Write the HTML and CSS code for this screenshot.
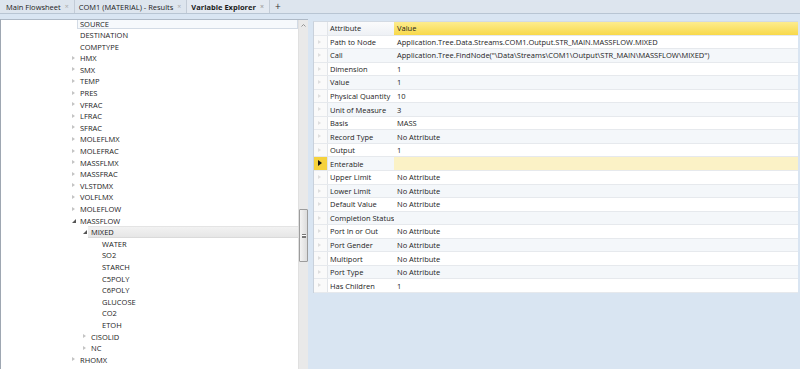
FILE: index.html
```html
<!DOCTYPE html>
<html>
<head>
<meta charset="utf-8">
<link rel="stylesheet" href="styles.css">
</head>
<body>
<div class="tabbar">
  <div class="tab"><span>Main Flowsheet</span><span class="x">×</span></div>
  <div class="tab"><span>COM1 (MATERIAL) - Results</span><span class="x">×</span></div>
  <div class="tab active"><span>Variable Explorer</span><span class="x">×</span></div>
  <div class="plus">+</div>
</div>
<div class="main">
  <div class="left">
    <div class="tree">
      <div class="tree-inner">
        <div class="node l0"><span class="exp"></span><span class="lbl hot">SOURCE</span></div>
        <div class="node l0"><span class="exp"></span><span class="lbl">DESTINATION</span></div>
        <div class="node l0"><span class="exp"></span><span class="lbl">COMPTYPE</span></div>
        <div class="node l0"><span class="exp c"></span><span class="lbl">HMX</span></div>
        <div class="node l0"><span class="exp c"></span><span class="lbl">SMX</span></div>
        <div class="node l0"><span class="exp c"></span><span class="lbl">TEMP</span></div>
        <div class="node l0"><span class="exp c"></span><span class="lbl">PRES</span></div>
        <div class="node l0"><span class="exp c"></span><span class="lbl">VFRAC</span></div>
        <div class="node l0"><span class="exp c"></span><span class="lbl">LFRAC</span></div>
        <div class="node l0"><span class="exp c"></span><span class="lbl">SFRAC</span></div>
        <div class="node l0"><span class="exp c"></span><span class="lbl">MOLEFLMX</span></div>
        <div class="node l0"><span class="exp c"></span><span class="lbl">MOLEFRAC</span></div>
        <div class="node l0"><span class="exp c"></span><span class="lbl">MASSFLMX</span></div>
        <div class="node l0"><span class="exp c"></span><span class="lbl">MASSFRAC</span></div>
        <div class="node l0"><span class="exp c"></span><span class="lbl">VLSTDMX</span></div>
        <div class="node l0"><span class="exp c"></span><span class="lbl">VOLFLMX</span></div>
        <div class="node l0"><span class="exp c"></span><span class="lbl">MOLEFLOW</span></div>
        <div class="node l0"><span class="exp o"></span><span class="lbl">MASSFLOW</span></div>
        <div class="node l1"><span class="exp o"></span><span class="lbl sel">MIXED</span></div>
        <div class="node l2"><span class="exp"></span><span class="lbl">WATER</span></div>
        <div class="node l2"><span class="exp"></span><span class="lbl">SO2</span></div>
        <div class="node l2"><span class="exp"></span><span class="lbl">STARCH</span></div>
        <div class="node l2"><span class="exp"></span><span class="lbl">C5POLY</span></div>
        <div class="node l2"><span class="exp"></span><span class="lbl">C6POLY</span></div>
        <div class="node l2"><span class="exp"></span><span class="lbl">GLUCOSE</span></div>
        <div class="node l2"><span class="exp"></span><span class="lbl">CO2</span></div>
        <div class="node l2"><span class="exp"></span><span class="lbl">ETOH</span></div>
        <div class="node l1"><span class="exp c"></span><span class="lbl">CISOLID</span></div>
        <div class="node l1"><span class="exp c"></span><span class="lbl">NC</span></div>
        <div class="node l0"><span class="exp c"></span><span class="lbl">RHOMX</span></div>
      </div>
    </div>
    <div class="vscroll">
      <div class="arrow"><svg width="5" height="3" viewBox="0 0 5 3"><polyline points="0.5,2.5 2.5,0.5 4.5,2.5" fill="none" stroke="#8a8a8a" stroke-width="0.9"/></svg></div>
      <div class="thumb"><span class="grip"></span></div>
    </div>
  </div>
  <div class="right">
    <div class="grid">
      <div class="row head"><div class="rh"></div><div class="c1">Attribute</div><div class="c2 hv">Value</div></div>
      <div class="row"><div class="rh"></div><div class="c1">Path to Node</div><div class="c2">Application.Tree.Data.Streams.COM1.Output.STR_MAIN.MASSFLOW.MIXED</div></div>
      <div class="row alt"><div class="rh"></div><div class="c1">Call</div><div class="c2">Application.Tree.FindNode("\Data\Streams\COM1\Output\STR_MAIN\MASSFLOW\MIXED")</div></div>
      <div class="row"><div class="rh"></div><div class="c1">Dimension</div><div class="c2">1</div></div>
      <div class="row alt"><div class="rh"></div><div class="c1">Value</div><div class="c2">1</div></div>
      <div class="row"><div class="rh"></div><div class="c1">Physical Quantity</div><div class="c2">10</div></div>
      <div class="row alt"><div class="rh"></div><div class="c1">Unit of Measure</div><div class="c2">3</div></div>
      <div class="row"><div class="rh"></div><div class="c1">Basis</div><div class="c2">MASS</div></div>
      <div class="row alt"><div class="rh"></div><div class="c1">Record Type</div><div class="c2">No Attribute</div></div>
      <div class="row"><div class="rh"></div><div class="c1">Output</div><div class="c2">1</div></div>
      <div class="row alt cur"><div class="rh"></div><div class="c1">Enterable</div><div class="c2"></div></div>
      <div class="row"><div class="rh"></div><div class="c1">Upper Limit</div><div class="c2">No Attribute</div></div>
      <div class="row alt"><div class="rh"></div><div class="c1">Lower Limit</div><div class="c2">No Attribute</div></div>
      <div class="row"><div class="rh"></div><div class="c1">Default Value</div><div class="c2">No Attribute</div></div>
      <div class="row alt"><div class="rh"></div><div class="c1">Completion Status</div><div class="c2"></div></div>
      <div class="row"><div class="rh"></div><div class="c1">Port In or Out</div><div class="c2">No Attribute</div></div>
      <div class="row alt"><div class="rh"></div><div class="c1">Port Gender</div><div class="c2">No Attribute</div></div>
      <div class="row"><div class="rh"></div><div class="c1">Multiport</div><div class="c2">No Attribute</div></div>
      <div class="row alt"><div class="rh"></div><div class="c1">Port Type</div><div class="c2">No Attribute</div></div>
      <div class="row"><div class="rh"></div><div class="c1">Has Children</div><div class="c2">1</div></div>
    </div>
  </div>
</div>
</body>
</html>
```
FILE: styles.css
```css
* { box-sizing: border-box; }
html, body { margin: 0; padding: 0; }
body {
  width: 800px;
  height: 369px;
  overflow: hidden;
  font-family: "Open Sans", "Noto Sans", sans-serif;
  font-size: 7.5px;
  color: #1c1c1c;
  background: #d9e5f2;
}

/* tab bar */
.tabbar {
  height: 14px;
  display: flex;
  align-items: stretch;
  background: #dde5ee;
  border-bottom: 1px solid #b8c5d3;
  padding-left: 2px;
}
.tab {
  display: flex;
  align-items: center;
  gap: 4px;
  padding: 0 5px 0 4px;
  border-right: 1px solid #c3ccd7;
  white-space: nowrap;
}
.tab .x { color: #a9a9a9; font-size: 7px; }
.tab.active { font-weight: 700; background: #e3e9f1; }
.plus {
  padding: 0 5px;
  font-size: 10px;
  line-height: 13px;
  color: #333;
}

/* main */
.main { display: flex; height: 355px; }

.left {
  width: 308px;
  display: flex;
  margin-top: 5px;
  border-top: 1px solid #aeb9c6;
  border-left: 1px solid #9ea7b2;
  background: #fff;
}
.tree { flex: 1; overflow: hidden; }
.tree-inner { margin-top: -2.3px; }
.node {
  height: 11.6px;
  display: flex;
  align-items: stretch;
  white-space: nowrap;
}
.node.l0 { padding-left: 68px; }
.node.l1 { padding-left: 79px; }
.node.l2 { padding-left: 90px; }
.exp {
  width: 8px;
  flex: none;
  position: relative;
}
.exp.c::before {
  content: "";
  position: absolute;
  left: 3px;
  top: 3.3px;
  border-left: 3px solid #c4c4c4;
  border-top: 2.5px solid transparent;
  border-bottom: 2.5px solid transparent;
}
.exp.o::before {
  content: "";
  position: absolute;
  left: 3px;
  top: 4px;
  border-right: 4px solid #555;
  border-top: 4px solid transparent;
}
.lbl {
  flex: 1;
  padding-left: 3px;
  display: flex;
  align-items: center;
}
.lbl.hot {
  border: 1px solid #d3dbe5;
  background: #f6f9fc;
  padding-left: 2px;
}
.lbl.sel {
  background: linear-gradient(#f2f2f2, #e6e6e6);
  border-top: 1px solid #e4e4e4;
  border-bottom: 1px solid #dadada;
}

.vscroll {
  width: 10px;
  flex: none;
  background: #e9e9e9;
  border-left: 1px solid #e0e0e0;
  display: flex;
  flex-direction: column;
  align-items: center;
}
.arrow { height: 10px; display: flex; align-items: center; justify-content: center; }
.thumb {
  margin-top: 179px;
  width: 9px;
  height: 53px;
  border: 1px solid #9c9c9c;
  border-radius: 1px;
  background: linear-gradient(to right, #f3f3f3, #dcdcdc);
  display: flex;
  align-items: center;
  justify-content: center;
}
.grip {
  width: 4px;
  height: 4px;
  border-top: 1px solid #777;
  border-bottom: 1px solid #777;
  background: linear-gradient(#fff 0 1px, #777 1px 2px, #fff 2px);
}

/* right grid */
.right {
  flex: 1;
  padding: 7px 2px 0 5px;
}
.grid {
  border-left: 1px solid #c9d1db;
  border-top: 1px solid #d3dae3;
  background: #fff;
}
.row {
  display: grid;
  grid-template-columns: 14px 66px 1fr;
  height: 13.55px;
  border-bottom: 1px solid #e6e9ed;
}
.row.head { height: 13.5px; }
.row.alt { background: #f4f7fa; }
.rh {
  position: relative;
  border-right: 1px solid #e2e5e9;
  background: #fafafa;
}
.row:not(.head) .rh::before {
  content: "";
  position: absolute;
  left: 4px;
  top: 4px;
  border-left: 3px solid #dedede;
  border-top: 2.5px solid transparent;
  border-bottom: 2.5px solid transparent;
}
.row.cur .rh { background: #f5d23e; }
.row.cur .rh::before { border-left-color: #111; border-left-width: 4px; border-top-width: 3px; border-bottom-width: 3px; top: 3px; }
.row.cur .c2 { background: #fbf2c6; }
.c1 {
  padding-left: 2px;
  display: flex;
  align-items: center;
  white-space: nowrap;
  overflow: hidden;
}
.c2 {
  padding-left: 3px;
  display: flex;
  align-items: center;
  white-space: nowrap;
  overflow: hidden;
}
.row.head .c1 { background: linear-gradient(#fbfbfc, #eef1f5); }
.row.head .rh { background: #f7f8fa; }
.c2.hv { background: linear-gradient(#fdec8e, #f8d94a); }
```
